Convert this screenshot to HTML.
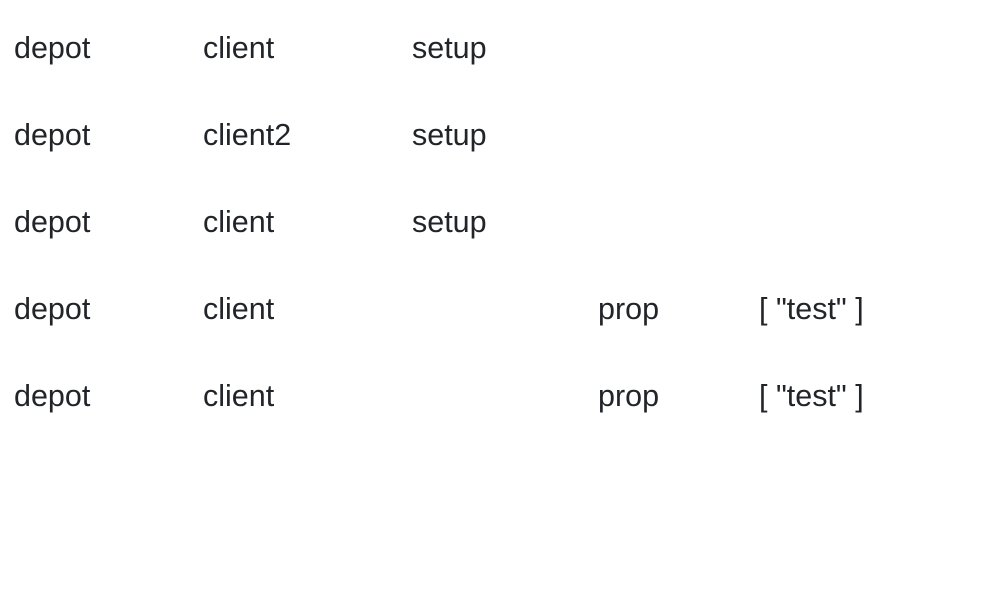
<!DOCTYPE html>
<html><head><style>
body{margin:0;background:#fff;font-family:"Liberation Sans",sans-serif;font-size:30.5px;color:#212529;}
.r{position:absolute;left:0;height:40px;width:984px;}
.r span{position:absolute;top:0;line-height:40px;white-space:pre;}
</style></head><body>
<div class="r" style="top:28px"><span style="left:14px">depot</span><span style="left:203px">client</span><span style="left:412px">setup</span></div>
<div class="r" style="top:115px"><span style="left:14px">depot</span><span style="left:203px">client2</span><span style="left:412px">setup</span></div>
<div class="r" style="top:202px"><span style="left:14px">depot</span><span style="left:203px">client</span><span style="left:412px">setup</span></div>
<div class="r" style="top:289px"><span style="left:14px">depot</span><span style="left:203px">client</span><span style="left:598px">prop</span><span style="left:759px">[ "test" ]</span></div>
<div class="r" style="top:376px"><span style="left:14px">depot</span><span style="left:203px">client</span><span style="left:598px">prop</span><span style="left:759px">[ "test" ]</span></div>
</body></html>
